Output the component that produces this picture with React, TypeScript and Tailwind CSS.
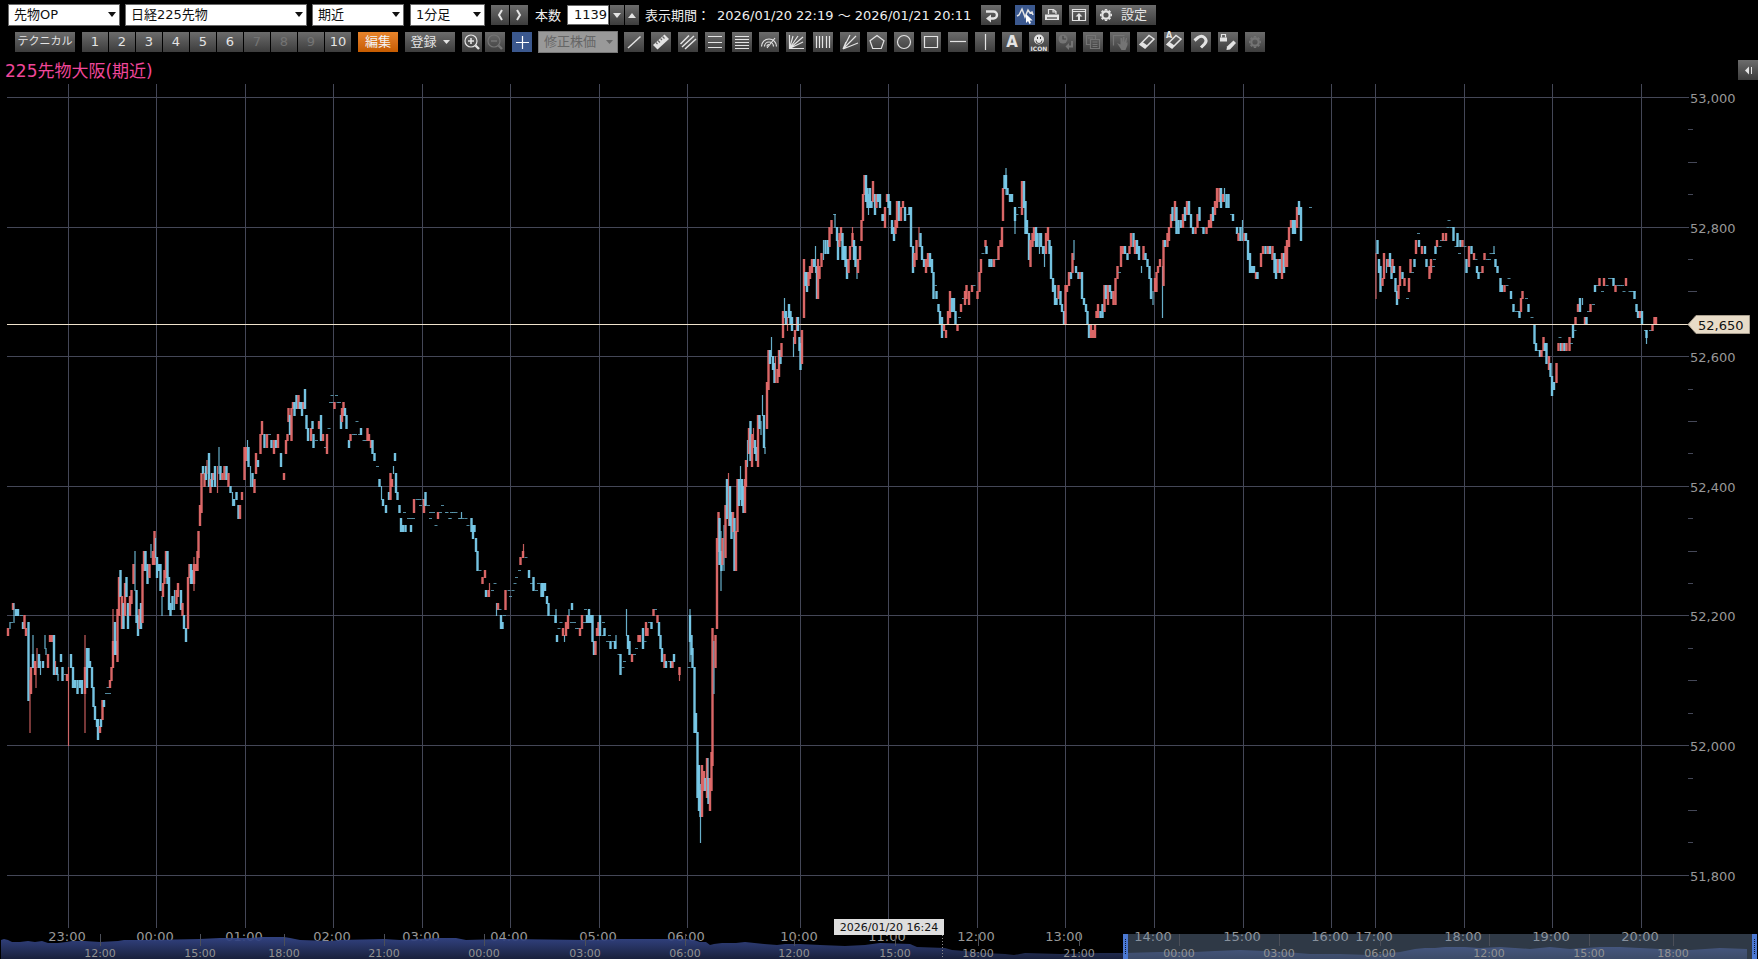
import type { ReactNode } from 'react'
import clsx from 'clsx'

// One token per bar: x position, kind, high level and low level.
// r / b = rising / falling body, R / B = wick only, d = unchanged bar.
// Levels count down from 53,000 in steps of 10 yen.
const BARS = `
8r82-83 10B81-82 11d81 13r78-79 14B78-81 16b79-80 18b79-80 21d80 23b81-82 24.5r80-82 26r82-83 28.5b81-93 30R90-98
31r88-92 33B83-88 33b86-88 35r87-89 36R88-91 37R85-88 39b86-88 40.5B87-89 43b87-88 45B83-85 46B85-86 48r86-88 50r83-84
52r83-84 54b83-89 55.5R87-89 57b88-89 58B89-90 61b86-87 62.5b88-90 65d89 67r89-90 68.5R88-100 71b86-88 73b88-91
75b90-91 77.5b90-92 80b90-91 82b90-92 85R83-98 85r88-92 87b85-91 88.5b85-88 90b87-88 92b88-91 93.5b91-94 95b94-96
97b96-97 98b96-99 100r97-98 101b96-97 102.5r93-96 104b93-94 106d92 107.5d91 109d92 110r90-91 111.5r88-90 113R79-88
113r84-88 115b81-86 116b84-86 117.5r79-87 119r74-80 120.5b73-77 122r77-82 123.5b78-82 125r75-80 126.5b74-77 128b78-82
130r77-80 131.5r76-78 133.5r72-75 135B70-76 136.5b76-81 138b80-83 139.5r79-82 141b78-82 142.5r72-81 144r70-73
145.5b70-73 147.5b72-75 149.5r72-74 151B69-71 153r70-72 154.5r67-72 155.5B68-71 157b71-74 159b72-73 160.5b72-76
162B77-80 163r75-77 164.5r73-75 166r70-74 167.5b70-75 169b74-79 170.5b78-80 172.5b77-79 174.5B76-79 176.5r76-78
178r75-77 181b76-79 182.5r78-80 184b80-82 186b82-84 188r74-82 189.5r72-74 191b72-75 192.5b73-75 194R71-76 194r72-75
196r72-73 197.5r70-73 198.5r67-71 200r63-66 201.5r58-64 203b57-58 204.5r58-60 206b57-59 207R56-58 209b55-60
210.5r59-61 212b58-60 213.5r58-59 215b57-60 217.5R57-61 219B54-58 220.5b57-59 222.5r58-59 224.5r57-59 226.5b57-59
228.5r58-60 230.5b60-61 232.5B61-63 234b62-63 236.5b61-62 238.5b63-65 240r63-65 242r61-62 244.5r54-59 246r54-56
247.5B53-56 248.5b54-57 250.5B57-60 252.5b58-60 254.5r59-61 256r55-58 258b56-57 260.5r52-55 262r50-52 264.5b52-54
267r52-54 269d52 271.5b53-54 274r53-55 276b53-54 278r52-54 281b55-57 284r58-59 286r53-55 287.5r52-53 288.5r48-50
290b49-52 291.5r48-53 293r47-48 294.5b47-49 296.5b46-48 298.5r46-48 300b47-48 302b47-49 303.5r47-48 305b45-48
306.5b49-51 308b51-53 311r51-53 312.5b50-51 313.5b52-54 316d53 319r50-51 321b49-53 323r52-53 325d54 327r52-55 328.5d51
330d47 331.5d46 332.5d47 334.5r47-48 336d46 337.5d47 339d47 341b49-51 342r48-50 343.5r47-49 345b48-49 346.5b49-51
349b53-54 350.5r52-53 353d52 355d52 356.5d50 359d52 361b51-52 363.5d53 365.5d53 367.5r51-53 369r52-53 371r53-54
372.5b53-55 374.5b55-56 377d57 379.5b59-60 381.5B60-62 383b62-63 386b63-64 389b61-62 390.5r58-62 392r59-60 393.5B57-58
395b55-56 396b58-61 397.5b61-62 399.5b63-64 401b65-67 403b66-67 404d64 405.5b66-67 408d65 410.5d65 411b66-67 413d65
414r62-64 416.5d62 419d62 420d63 422.5d62 424r62-64 425.5b61-63 428d63 430d65 430d64 433d64 435.5d66 438r64-65
440d64 442d63 446.5d64 449.5d65 451d64 453d64 455.5d64 459d65 446d64 449.5d65 461.5B64-65 460d65 462.5d65 465.5d65
467.5d66 471.5b65-67 473b66-68 474.5b66-67 476b68-70 477.5b70-73 479.5d73 482.5r74-75 485r73-74 486b76-77 488.5r76-77
489.5R75-77 492d76 494.5d75 496.5B78-80 498r78-79 499.5d79 501b80-82 502.5b81-82 504d80 505.5r76-79 508.5d76 510d77
512.5d76 514.5d75 516d74 519d73 520.5r71-72 523.5R69-71 523r70-71 525.5d71 529b73-74 531d75 533.5b74-76 536d76 538d75
541.5b75-77 543b75-77 545b75-76 547b77-78 548.5b78-80 551d80 553.5d80 555.5b80-81 556B79-81 557b83-84 558.5d82 560.5d81
563r82-83 564.5B83-84 566r81-83 568r80-82 569B79-80 572b78-79 571d81 574d81 576d82 578d82 580r82-83 582r80-82 584d81
585d79 587b80-81 589b79-81 591b80-81 592.5b80-84 594b84-86 595.5r84-86 597r82-83 598.5r81-83 600b80-83 602.5d83
603d81 604.5b82-83 607d84 609d83 610.5b84-85 613d84 615b84-85 616B83-85 618.5d86 620.5b86-89 622.5d88 624d87
626.5B79-83 628b83-85 629.5b84-86 632r86-87 634d86 636d85 638.5r83-84 640r83-84 643b82-85 644.5d84 646r81-83
647.5r82-83 649d81 651.5b81-82 653.5r79-80 655d79 657.5r80-81 659b81-83 660.5b83-85 662b85-87 664.5r86-88 666b87-88
669d87 671b87-88 672.5r87-88 674b86-87 679.5r88-89 679.5R88-90 688.5d88 690B79-87 690b80-84 691.5b83-86 692.5b85-88
694.5b88-98 696b95-98 697.5b98-108 699b103-110 700.5B106-115 700.5b107-111 702r103-111 704r104-107 705.5b105-107
707r102-108 708.5b105-109 708B102-105 710r105-110 711.5r101-107 712.5r82-103 714B84-92 715.5r83-88 717r68-82
718.5r64-70 719.5b65-72 721B67-76 721.5b70-73 722.5r68-72 724B66-73 725.5r63-71 727b59-65 728.5R58-66 730b60-66
731.5b64-68 733r64-67 734.5b65-73 736r67-73 737.5r59-67 739b59-63 740.5B57-62 742b59-63 743.5b60-64 745r59-64
746r56-60 747.5B53-57 749r51-55 750.5b50-56 752r52-57 753.5R51-54 755b53-55 756.5b54-56 758r49-57 759.5b49-51
761B50-52 762.5B46-49 764b49-54 765B54-55 767r44-51 768.5r39-45 770b39-41 771.5B37-40 773b40-42 774.5b41-44
775.5R40-44 777.5r42-44 779r39-43 780.5b39-41 781.5r38-40 783r33-37 784.5B31-34 786b33-35 787.5R34-36 789b32-34
790.5b33-35 792b34-36 793.5B37-40 795r36-38 797r34-36 798b34-36 799.5b37-39 800.5b38-42 802r36-41 804r25-34
805.5b27-29 807b27-30 808.5r27-29 810r26-28 812r25-27 814b25-26 815.5B23-27 817b26-31 818r25-31 819.5r26-28
821.5r24-26 823.5B22-25 825.5b22-24 828b22-24 829.5r20-23 831.5r19-21 834d18 835B18-20 837b20-22 838b22-25
839.5r21-23 841r20-22 842.5b21-25 844b23-25 845.5b23-26 847b25-28 848.5r25-27 850r23-25 852.5r21-23 852.5R20-23
854b22-25 855.5b23-26 857B25-28 858r25-27 860r23-25 861.5r19-22 863r15-19 864.5r12-15 866b12-16 867.5b14-17
868.5B15-18 870b14-17 871.5b16-17 873r13-16 875b15-18 876.5r15-17 878b15-16 880b15-17 882.5b18-19 884b18-19
885r17-20 887r15-16 888.5b15-17 890b16-18 892b19-21 894b20-22 895.5r19-21 897r16-20 899b16-19 901r17-19 903r16-17
905b17-19 907.5d18 909.5b17-18 911b17-23 913b23-27 914.5r24-26 916.5r22-25 919R20-23 920.5b21-23 922b23-25 924b25-26
926r25-27 928r24-26 930b24-26 932b25-27 933.5b27-31 935d29 936.5b30-31 938.5b32-33 940b33-35 942b34-37 944r35-36
946r36-37 948r33-35 950r30-34 952b31-33 954b31-33 955.5b33-35 957.5r35-36 959d34 961r32-33 963d31 965r30-32
966.5r29-31 969r30-32 972r29-30 973.5d29 977.5r30-31 979.5r27-30 981r25-27 982.5d24 985.5r22-23 986.5b23-24
989.5b25-26 991.5b25-26 994r25-26 996d25 998.5r23-25 1000.5r22-23 1002r20-23 1003r14-19 1004.5b12-14 1006B11-15
1006b12-14 1007.5b14-15 1010b15-16 1012b15-16 1015B17-21 1015b17-19 1016.5d18 1019d17 1022r13-18 1024b13-17
1025.5b16-21 1027b19-21 1029b21-25 1030.5r22-26 1032.5r21-23 1034r20-22 1036b20-23 1037.5b21-23 1039.5B21-24
1041b21-23 1043b23-24 1044.5B23-26 1046r21-24 1048r20-22 1049.5b22-24 1051b23-28 1053b28-30 1055b29-32 1056.5b31-32
1058.5r29-31 1060.5b30-32 1062b32-33 1064b33-35 1065.5r29-35 1067r29-30 1069r27-29 1071b27-28 1072.5r24-27 1074B22-25
1076b26-27 1078.5b27-28 1080r27-28 1082b27-31 1084b31-32 1086b32-33 1087.5b33-35 1089b35-37 1091r35-37 1093r36-37
1095r35-37 1096.5r33-34 1098r32-34 1100.5b33-34 1102.5b32-34 1104.5r29-33 1106b29-31 1108r29-32 1110b29-30
1111.5b30-31 1113.5r30-32 1115.5r28-32 1117.5r26-28 1119d27 1121r23-26 1123r23-24 1125b23-24 1127.5b24-25
1129.5r23-24 1131r21-23 1133.5b21-23 1135r22-24 1137b22-24 1139b23-25 1141.5B26-27 1143.5r23-25 1145.5b24-25
1147.5b25-26 1149.5b26-28 1151b28-31 1153B30-32 1155r28-30 1156.5r27-30 1158r26-27 1160r25-26 1162.5B26-34
1163.5r22-29 1165b22-23 1167.5r21-23 1169r20-22 1171r18-20 1172.5b17-19 1175r16-19 1176.5b17-21 1178.5b19-21
1181b19-20 1183r18-20 1185b17-19 1187r16-18 1189b16-18 1191b18-20 1193b20-21 1195.5r20-21 1197.5r18-20 1199.5b17-19
1201.5d20 1203.5b20-21 1206.5r20-21 1209r19-20 1211r18-20 1213b17-19 1215r16-18 1217r14-17 1219.5r14-16 1221b14-17
1223r15-16 1224.5B14-16 1226.5b15-17 1228.5b15-17 1231d18 1233b18-19 1237b20-21 1238.5r21-22 1240.5b20-22
1242.5B19-22 1244.5r21-22 1246b21-22 1248b22-25 1250b24-27 1252b26-27 1254b26-27 1256r27-28 1257.5b27-28 1261r24-26
1263r23-24 1265.5b23-24 1268r23-24 1270b23-24 1272.5r23-25 1274.5b24-27 1276b25-28 1278r25-27 1280b25-27 1282r24-28
1284b24-27 1285.5r23-26 1287r22-26 1289r20-23 1291r19-20 1293b19-21 1295b19-21 1297r17-20 1299b16-18 1301b17-22
1310d17 1376R24-31 1377.5b22-24 1379b25-27 1380.5b26-30 1382.5r28-29 1384r24-28 1386.5B25-27 1388r25-26 1390b24-26
1391.5b26-28 1392.5r25-27 1394b26-27 1395.5b28-30 1397b30-32 1398.5r29-31 1400r26-29 1402.5b27-28 1404.5r28-29
1407d31 1409r28-30 1410.5r25-27 1412d27 1414.5b25-26 1416r22-24 1418d21 1419b22-23 1422r23-24 1425b23-24
1426.5b25-26 1429.5r26-28 1431r25-27 1433d26 1434d25 1435.5b23-24 1437r22-23 1439.5d23 1441d22 1443r21-22 1444.5d22
1446r21-22 1448.5d19 1447.5d20 1451d20 1453.5b20-22 1455.5d23 1457.5b21-23 1459d24 1460.5b22-23 1462.5r22-23
1464.5d23 1466.5b25-27 1469r23-26 1471.5b23-24 1474r24-25 1475.5d25 1477b26-27 1478.5b27-28 1480.5d27 1482.5r26-27
1484.5r24-25 1487d25 1489d25 1490.5d24 1493d24 1494B23-24 1495.5b25-26 1497.5b26-27 1500.5b28-30 1502b29-30
1504.5r29-30 1506.5d29 1508.5d28 1511b30-31 1513.5b32-33 1516d33 1518d33 1519.5b33-34 1521r31-33 1522.5r30-31
1526d31 1528.5b32-33 1531.5d34 1534.5b35-38 1536b38-39 1538d39 1540b39-40 1541.5r39-40 1543.5r37-39 1545b38-39
1546.5b38-41 1549r40-42 1550.5b41-43 1552b43-46 1554b44-45 1556.5r41-44 1558.5r38-39 1559.5d37 1561b38-39 1562.5r38-39
1564.5b38-39 1566.5r38-39 1569.5r37-39 1571d38 1573b35-37 1574.5d36 1575.5r34-35 1578r32-33 1580b31-33 1582.5B31-32
1585r34-35 1586.5b34-35 1588d33 1590.5r32-33 1593d32 1595b29-30 1597d29 1599.5r28-29 1602d30 1604r28-29 1606.5d29
1609d28 1612d28 1613.5b28-29 1615.5r29-30 1617.5d29 1620d29 1622d29 1623.5d30 1626r28-29 1629.5d30 1631.5d30 1633.5d30
1634.5b30-31 1636.5b32-33 1638b33-34 1640r33-34 1642b33-35 1645d36 1646.5b36-37 1646.5B36-38 1650d36 1652.5r35-36
1654.5r34-35 1656r34-35
`
  .trim()
  .split(/\s+/)
  .map((token) => {
    const [, x, kind, high, low] = /^([\d.]+)([rbRBd])(\d+)(?:-(\d+))?$/.exec(token)!
    return { x: Number(x), kind, high: Number(high), low: Number(low ?? high) }
  })

const levelY = (level: number) => 97.5 + level * 6.481

const HOURS: [string, number][] = [
  ['23:00', 68], ['00:00', 156], ['01:00', 245], ['02:00', 333], ['03:00', 422], ['04:00', 510], ['05:00', 599],
  ['06:00', 687], ['10:00', 800], ['11:00', 888], ['12:00', 977], ['13:00', 1065], ['14:00', 1154], ['15:00', 1243],
  ['16:00', 1331], ['17:00', 1375], ['18:00', 1464], ['19:00', 1552], ['20:00', 1641],
]

const NAV_HOURS: [string, number][] = [
  ['12:00', 100], ['15:00', 200], ['18:00', 284], ['21:00', 384], ['00:00', 484], ['03:00', 585], ['06:00', 685],
  ['12:00', 794], ['15:00', 895], ['18:00', 978], ['21:00', 1079], ['00:00', 1179], ['03:00', 1279], ['06:00', 1380],
  ['12:00', 1489], ['15:00', 1589], ['18:00', 1673],
]

const PRICES = ['53,000', '52,800', '52,600', '52,400', '52,200', '52,000', '51,800']

const NAV_AREA =
  'M1 959V940L4 939L8 940L12 942L20 942L28 941L35 942L42 941L48 943L58 943L66 942L72 941L85 941L100 942L118 941L124 940L150 940L200 939L220 938L250 938L262 937L284 937L290 938L300 940L330 941L340 940L384 939L400 940L436 938L456 938L466 940L500 939L585 940L620 939L686 939L694 940L700 942L706 942L710 945L714 944L722 943L736 943L745 942L764 944L777 945L785 944L800 944L820 945L845 946L865 945L880 943L910 944L917 947L945 948L952 950L965 951L975 952L985 953L1005 954L1014 955L1025 953L1060 954L1100 953L1125 953L1160 952L1195 952L1215 951L1240 950L1265 951L1285 952L1310 954L1340 954L1370 955L1400 952L1415 949L1425 948L1435 948L1445 947L1465 947L1480 948L1500 947L1515 948L1530 949L1550 947L1570 949L1600 947L1620 947L1640 948L1660 949L1690 950L1720 948L1747 949V959Z'

function Bar({ x, kind, high, low }: (typeof BARS)[number]) {
  if (kind === 'd') {
    return <rect x={x - 1} y={Math.floor(levelY(high))} width={3} height={1} fill="#5fa0b8" opacity={0.85} />
  }
  const thin = kind === 'R' || kind === 'B'
  const width = thin ? 1.2 : 2.4
  const top = Math.floor(levelY(high))
  const bottom = Math.floor(levelY(low))
  return (
    <rect
      x={x - width / 2}
      y={top}
      width={width}
      height={bottom - top + 1}
      fill={kind.toLowerCase() === 'r' ? '#e56c6c' : '#7accec'}
      opacity={thin ? 0.85 : 0.95}
    />
  )
}

function Chart() {
  return (
    <svg viewBox="0 84 1758 875" className="block min-h-0 w-full flex-1" role="img" aria-label="225先物大阪(期近) 1分足">
      <defs>
        <linearGradient id="nav" x1="0" y1="0" x2="0" y2="1">
          <stop offset="0" stopColor="#36488c" />
          <stop offset="1" stopColor="#1b2340" />
        </linearGradient>
      </defs>

      <g stroke="#444757" strokeWidth={1}>
        {PRICES.map((p, i) => (
          <path key={p} d={`M7 ${Math.floor(levelY(i * 20)) + 0.5}H1689`} />
        ))}
        {HOURS.map(([label, x]) => (
          <path key={label} d={`M${x + 0.5} 84V928`} />
        ))}
        {Array.from({ length: 24 }, (_, i) => i)
          .filter((i) => i % 4 !== 0)
          .map((i) => (
            <path key={i} d={`M1688 ${Math.floor(levelY(i * 5)) + 0.5}H${i % 2 ? 1693 : 1697}`} />
          ))}
      </g>

      {BARS.map((bar, i) => (
        <Bar key={i} {...bar} />
      ))}

      <path d="M7 324.5H1689" stroke="#efe2cc" />

      <g fontSize={13} fill="#989898">
        {PRICES.map((p, i) => (
          <text key={p} x={1690} y={Math.floor(levelY(i * 20)) + 6}>
            {p}
          </text>
        ))}
        {HOURS.map(([label, x]) => (
          <text key={label} x={x - 1} y={941} textAnchor="middle">
            {label}
          </text>
        ))}
      </g>
      <path d="M1688 324.5L1696 315.5H1749.5V333.5H1696Z" fill="#e8dcc8" stroke="#a89e8e" />
      <text x={1698} y={330} fontSize={13} fill="#111">
        52,650
      </text>

      <path d={NAV_AREA} fill="url(#nav)" opacity={0.92} />
      <rect x={1128} y={934} width={625} height={25} fill="#6f88a8" opacity={0.42} />
      <g stroke="#4c4f58">
        {NAV_HOURS.map(([, x]) => (
          <path key={x} d={`M${x + 0.5} 934V946`} />
        ))}
      </g>
      <g fontSize={11} fill="#929292" textAnchor="middle">
        {NAV_HOURS.map(([label, x]) => (
          <text key={x} x={x} y={957}>
            {label}
          </text>
        ))}
      </g>
      {[1123, 1752].map((x) => (
        <g key={x}>
          <rect x={x} y={934} width={5} height={25} fill="#4b78d2" />
          <path d={`M${x + 2.5} 939V955`} stroke="#0b1630" strokeDasharray="1 1" />
        </g>
      ))}
      <path d="M942.5 935V959" stroke="#8a8a8a" strokeDasharray="1 2" />
      <rect x={834} y={919} width={110} height={16} fill="#dedede" />
      <text x={889} y={931} fontSize={11} fill="#111" textAnchor="middle">
        2026/01/20 16:24
      </text>
    </svg>
  )
}

const ICONS: Record<string, ReactNode> = {
  undo: (
    <>
      <path d="M5 6.5h7.5a3.5 3.5 0 0 1 0 7H9" strokeWidth={2.4} />
      <path d="M10 9.5v8l-5-4z" fill="currentColor" stroke="none" />
    </>
  ),
  wave: (
    <>
      <path d="M2 11l2-1 3-6 3 8 3-7 2 3 2-1 1 3" strokeWidth={1.5} />
      <path d="M11 9v9l2-2 1.5 3 1.5-1-1.3-2.5h3z" fill="#fff" stroke="none" />
    </>
  ),
  print: (
    <>
      <path d="M6.5 9V4.5h5l2.5 2V9M11 4.5V7h3" />
      <path d="M3 9.5h14V15H3z" fill="currentColor" stroke="none" />
      <path d="M5 13h10" stroke="#444" />
    </>
  ),
  upload: (
    <>
      <path d="M3.5 4.5h13v11h-13zM3.5 6.5h13" />
      <path d="M10 8l3.5 3.5H11V15H9v-3.5H6.5z" fill="currentColor" stroke="none" />
    </>
  ),
  gear: (
    <>
      <circle cx="10" cy="10" r="3.7" strokeWidth={2.2} />
      <path
        d="M10 4v1.5M10 14.5V16M4 10h1.5M14.5 10H16M5.8 5.8l1 1M13.2 13.2l1 1M14.2 5.8l-1 1M6.8 13.2l-1 1"
        strokeWidth={2.4}
      />
    </>
  ),
  zoomIn: (
    <>
      <circle cx="9" cy="9" r="6" />
      <path d="M6 9h6M9 6v6" strokeWidth={1.6} />
      <path d="M13.5 13.5l3.5 3.5" strokeWidth={2.4} />
    </>
  ),
  zoomOut: (
    <>
      <circle cx="9" cy="9" r="6" />
      <path d="M6 9h6" strokeWidth={1.6} />
      <path d="M13.5 13.5l3.5 3.5" strokeWidth={2.4} />
    </>
  ),
  cross: <path d="M10.5 4v13M4 10.5h13" stroke="#fff" />,
  trend: <path d="M4 16L16.5 4.5" strokeWidth={1.5} />,
  ruler: (
    <>
      <path d="M2 13L13.5 2.5 18 7 6.5 17.5z" fill="currentColor" stroke="none" />
      <path d="M5 10.5l1.5 1.5M7 8.5l2 2M9.5 6.5L11 8M11.5 4.5l2 2" stroke="#666" />
    </>
  ),
  parallel: <path d="M2.5 12L11 3.5M4 15L16 4M7 17L18 7" strokeWidth={1.5} />,
  lines3: <path d="M3 4.5h14M3 10.5h14M3 15.5h14" />,
  lines4: <path d="M3 4.5h14M3 7.5h14M3 10.5h14M3 13.5h14M3 16.5h14" />,
  arcs: (
    <>
      <path d="M2.5 14.500a7.500 7.500 0 0 1 15 0M5.500 14.500a4.500 4.500 0 0 1 9 0M8 14.500a2 2 0 0 1 2-2" />
      <path d="M8 16L16 6" />
    </>
  ),
  fan: <path d="M3.5 3v13.5H18M3.5 16.5L7 4M3.5 16.5L12 4M3.5 16.5L17 5M3.5 16.5L17 10" />,
  vlines: <path d="M3.5 4v12M6.5 4v12M9.5 4v12M13.5 4v12M16.5 4v12" />,
  rays: <path d="M3 17L10 3M3 17L16 4M3 17L18 11M3 17L6 10" />,
  pentagon: <path d="M10 3.5l7 5.2-2.7 7.8H5.7L3 8.7z" />,
  circle: <circle cx="10" cy="10" r="6.5" />,
  square: <path d="M3.5 4.5h13v11h-13z" />,
  hline: <path d="M2 9.5h16" />,
  vline: <path d="M10.5 2v16" />,
  stamp: (
    <>
      <circle cx="10" cy="6.5" r="5" fill="currentColor" stroke="none" />
      <path d="M8.5 4v2M11.5 4v2M7 7.5a3 3 0 0 0 6 0" stroke="#444" />
    </>
  ),
  clock: (
    <>
      <circle cx="7" cy="7" r="4.5" fill="currentColor" stroke="none" />
      <path d="M7 4v3h3" stroke="#444" />
      <path d="M16 9v5.5h-4" strokeWidth={2} />
      <path d="M13 11v7l-3.5-3.5z" fill="currentColor" stroke="none" />
    </>
  ),
  copy: <path d="M12.5 7V3.5h-9v9H7M7.5 7.5h9v9h-9zM5 6h5M9.5 10h5M9.5 12.5h5M9.5 14.5h5" />,
  hand: (
    <>
      <path d="M3.5 13.5v-10h11" />
      <path d="M7 11l3.5 1.5V6H12v4l1-5h1.5v5L16 6h1l-.5 5 1-1v3l-2 5h-4z" fill="currentColor" stroke="none" />
    </>
  ),
  eraser: (
    <>
      <path d="M3 12.5L12 3.5l5 3.5-9 9z" strokeWidth={1.5} />
      <path d="M3 12.5L5.5 10l5 3.500L8 16z" fill="currentColor" stroke="none" />
    </>
  ),
  magnet: <path d="M3.5 8.5L7 5.500C12 2 17.500 7.500 13.500 12L10 15.500" strokeWidth={3} />,
  pencil: (
    <>
      <path d="M2 5.5h7v4H2z" fill="currentColor" stroke="none" />
      <path d="M3.500 5.500v-3h4v3" />
      <path d="M8.500 18l.5-3.500 6.500-6 2.500 2.500-6 6.500z" fill="currentColor" stroke="none" />
    </>
  ),
}

function Icon({ name }: { name: string }) {
  return (
    <svg viewBox="0 0 20 20" className="block size-5" fill="none" stroke="currentColor" strokeWidth={1.2} aria-hidden="true">
      {ICONS[name]}
    </svg>
  )
}

interface ToolButtonProps {
  label: string
  icon?: string
  active?: boolean
  disabled?: boolean
  className?: string
  children?: ReactNode
}

function ToolButton({ label, icon, active, disabled, className = 'w-5', children }: ToolButtonProps) {
  return (
    <button
      type="button"
      aria-label={label}
      disabled={disabled}
      className={clsx(
        'relative flex h-5 shrink-0 items-center justify-center whitespace-nowrap text-[13px]',
        active ? 'bg-[#3b588e]' : 'bg-linear-to-b from-[#6c6c6c] to-[#3d3d3d]',
        disabled ? 'text-[#747474]' : 'text-[#e4e4e4]',
        className
      )}
    >
      {icon && <Icon name={icon} />}
      {children}
    </button>
  )
}

function Picker({ label, value, className }: { label: string; value: string; className: string }) {
  return (
    <div className={clsx('relative shrink-0', className)}>
      <select
        aria-label={label}
        className="block h-[22px] w-full appearance-none border border-[#6a6a6a] bg-white pl-[5px] text-[13px] leading-5 text-[#111]"
      >
        <option>{value}</option>
      </select>
      <svg viewBox="0 0 8 5" className="pointer-events-none absolute top-[8px] right-1 h-[5px] w-2" aria-hidden="true">
        <path d="M0 0h8L4 5z" fill="#111" />
      </svg>
    </div>
  )
}

const DRAW_TOOLS: [string, string][] = [
  ['トレンドライン', 'trend'], ['定規', 'ruler'], ['平行線', 'parallel'], ['水平線3本', 'lines3'], ['リトレースメント', 'lines4'],
  ['アーク', 'arcs'], ['ファン', 'fan'], ['タイムゾーン', 'vlines'], ['スピードライン', 'rays'], ['五角形', 'pentagon'],
  ['円', 'circle'], ['四角形', 'square'], ['水平線', 'hline'], ['垂直線', 'vline'],
]

export default function App() {
  return (
    <main className="flex h-screen flex-col overflow-hidden bg-black font-['DejaVu_Sans','Noto_Sans_CJK_JP',sans-serif] text-[13px] leading-5 text-[#eee]">
      <div className="flex h-[30px] items-center pl-2">
        <Picker label="種別" value="先物OP" className="mr-[5px] w-28" />
        <Picker label="銘柄" value="日経225先物" className="mr-[5px] w-[182px]" />
        <Picker label="限月" value="期近" className="mr-1.5 w-[92px]" />
        <Picker label="足種" value="1分足" className="mr-1.5 w-[75px]" />
        <ToolButton label="前へ" className="mr-px w-[18px]">
          <svg viewBox="0 0 18 20" className="h-5 w-[18px]" fill="none" stroke="currentColor" strokeWidth={2}>
            <path d="M11 5l-3 5 3 5" />
          </svg>
        </ToolButton>
        <ToolButton label="次へ" className="mr-[7px] w-[18px]">
          <svg viewBox="0 0 18 20" className="h-5 w-[18px]" fill="none" stroke="currentColor" strokeWidth={2}>
            <path d="M7 5l3 5-3 5" />
          </svg>
        </ToolButton>
        <label htmlFor="count" className="mr-1.5 shrink-0 pt-0.5">
          本数
        </label>
        <input
          id="count"
          defaultValue="1139"
          className="mr-px h-5 w-[42px] shrink-0 border border-[#6a6a6a] bg-white pr-px text-right text-[13px] text-[#111]"
        />
        <ToolButton label="減らす" className="mr-px w-3.5">
          <svg viewBox="0 0 8 5" className="h-[5px] w-2">
            <path d="M0 0h8L4 5z" fill="currentColor" />
          </svg>
        </ToolButton>
        <ToolButton label="増やす" className="mr-1.5 w-3.5">
          <svg viewBox="0 0 8 5" className="h-[5px] w-2">
            <path d="M0 5h8L4 0z" fill="currentColor" />
          </svg>
        </ToolButton>
        <span className="w-[72px] shrink-0 whitespace-nowrap pt-0.5">表示期間：</span>
        <span className="w-[264px] shrink-0 whitespace-nowrap pt-0.5">2026/01/20 22:19 ～ 2026/01/21 20:11</span>
        <ToolButton label="戻す" icon="undo" className="mr-3.5 w-5" />
        <div className="flex gap-[7px]">
          <ToolButton label="チャート選択" icon="wave" active />
          <ToolButton label="印刷" icon="print" />
          <ToolButton label="別画面" icon="upload" />
          <ToolButton label="設定" icon="gear" className="w-[60px] justify-start! gap-[5px]">
            <span>設定</span>
          </ToolButton>
        </div>
      </div>

      <div className="flex h-[26px] items-center pb-0.5 pl-[15px]">
        <ToolButton label="テクニカル" className="mr-[7px] w-[60px] text-[11px]!">
          テクニカル
        </ToolButton>
        <div className="mr-[7px] flex gap-px">
          {[1, 2, 3, 4, 5, 6, 7, 8, 9, 10].map((n) => (
            <ToolButton key={n} label={`設定${n}`} className="w-[26px]" disabled={n > 6 && n < 10}>
              {n}
            </ToolButton>
          ))}
        </div>
        <button type="button" className="mr-[7px] h-5 w-10 shrink-0 bg-linear-to-b from-[#e8842a] to-[#c65c00] text-[13px] text-[#f4f4f4]">
          編集
        </button>
        <ToolButton label="登録" className="mr-[7px] w-[50px] gap-1.5">
          登録
          <svg viewBox="0 0 7 4" className="h-1 w-[7px]">
            <path d="M0 0h7L3.5 4z" fill="currentColor" />
          </svg>
        </ToolButton>
        <ToolButton label="拡大" icon="zoomIn" className="mr-[3px] w-5" />
        <ToolButton label="縮小" icon="zoomOut" className="mr-[7px] w-5" disabled />
        <ToolButton label="十字線" icon="cross" className="mr-1.5 w-5" active />
        <div className="relative mr-1.5 w-20 shrink-0">
          <select
            aria-label="修正株価"
            disabled
            className="block h-[22px] w-full appearance-none border border-[#777] bg-[#999] pl-[5px] text-[13px] leading-5 text-[#666] opacity-100"
          >
            <option>修正株価</option>
          </select>
          <svg viewBox="0 0 7 4" className="pointer-events-none absolute top-[9px] right-[5px] h-1 w-[7px]" aria-hidden="true">
            <path d="M0 0h7L3.5 4z" fill="#666" />
          </svg>
        </div>
        <div className="flex gap-[7px]">
          {DRAW_TOOLS.map(([label, icon]) => (
            <ToolButton key={icon} label={label} icon={icon} />
          ))}
          <ToolButton label="文字">
            <b className="text-[15px]">A</b>
          </ToolButton>
          <ToolButton label="アイコン" className="w-5 flex-col">
            <svg viewBox="0 0 20 12" className="h-3 w-5" fill="none" stroke="currentColor">
              {ICONS.stamp}
            </svg>
            <b className="text-[6px] leading-[7px]">ICON</b>
          </ToolButton>
          <ToolButton label="履歴" icon="clock" disabled />
          <ToolButton label="複製" icon="copy" disabled />
          <ToolButton label="移動" icon="hand" disabled />
          <ToolButton label="消去" icon="eraser" />
          <ToolButton label="すべて消去" icon="eraser">
            <b className="absolute top-0 left-0.5 text-[8px] leading-2">A</b>
          </ToolButton>
          <ToolButton label="マグネット" icon="magnet" />
          <ToolButton label="描画ロック" icon="pencil" />
          <ToolButton label="描画設定" icon="gear" disabled />
        </div>
      </div>

      <div className="flex h-7 items-center justify-between pl-[5px]">
        <h1 className="pt-0.5 text-[17px] leading-7 text-[#f0479a]">225先物大阪(期近)</h1>
        <ToolButton label="パネルを開く">
          <svg viewBox="0 0 20 20" className="size-5">
            <path d="M11 6.5v8L7 10.5z" fill="currentColor" />
            <path d="M13.5 7v7" stroke="currentColor" />
          </svg>
        </ToolButton>
      </div>

      <Chart />
    </main>
  )
}
